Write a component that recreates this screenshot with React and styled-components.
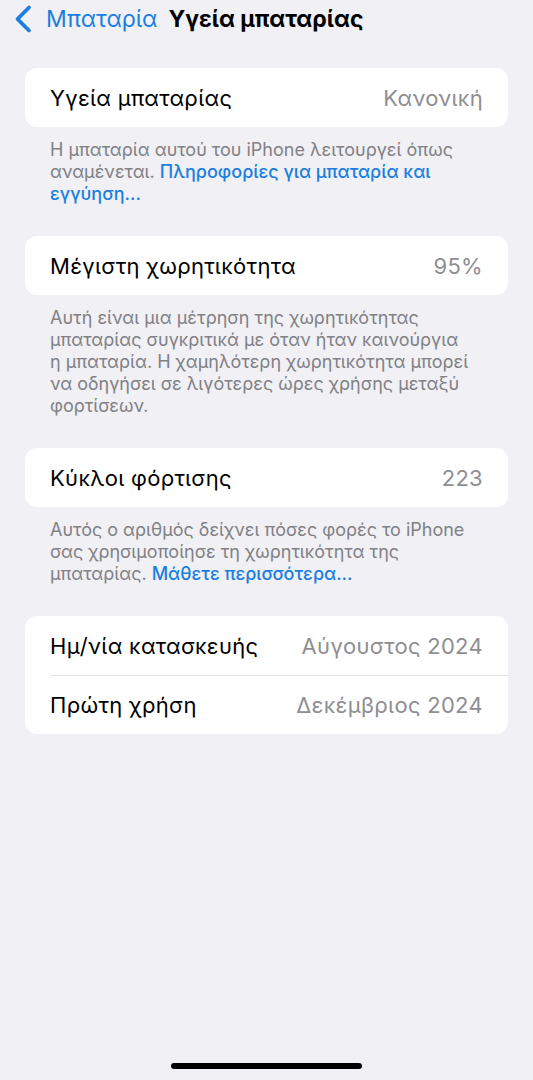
import React from "react";
import styled, { createGlobalStyle } from "styled-components";

const GlobalStyle = createGlobalStyle`
  html, body {
    margin: 0;
    padding: 0;
    background: #f0f0f5;
  }
  body {
    font-family: Inter, "Noto Sans", sans-serif;
    -webkit-font-smoothing: antialiased;
  }
`;

const Page = styled.div`
  width: 533px;
  min-height: 1080px;
  box-sizing: border-box;
  display: flex;
  flex-direction: column;
  background: #f0f0f5;
`;

const NavBar = styled.div`
  height: 38px;
  display: flex;
  align-items: center;
  padding-left: 14px;
  gap: 11px;
`;

const Back = styled.div`
  display: flex;
  align-items: center;
  gap: 12px;
  color: #1a7fe0;
  font-size: 23px;
`;

const NavTitle = styled.div`
  font-size: 23px;
  font-weight: 700;
  color: #000;
`;

const Content = styled.div`
  padding: 30px 25px 0;
  display: flex;
  flex-direction: column;
`;

const Group = styled.div`
  margin-bottom: 31px;
`;

const Card = styled.div`
  background: #fff;
  border-radius: 12px;
  padding-left: 25px;
`;

const Row = styled.div`
  height: 59px;
  display: flex;
  align-items: center;
  justify-content: space-between;
  padding-right: 25px;
  border-top: ${({ $divider }) => ($divider ? "1px solid #e3e3e8" : "none")};
  box-sizing: border-box;
`;

const Label = styled.span`
  font-size: 22px;
  letter-spacing: 0.3px;
  color: #000;
`;

const Value = styled.span`
  font-size: 22px;
  letter-spacing: 0.3px;
  color: #8e8e93;
`;

const Footer = styled.p`
  margin: 12px 0 0;
  padding: 0 25px;
  font-size: 18px;
  line-height: 22px;
  color: #818186;
`;

const Link = styled.span`
  color: #1a7fe0;
  font-weight: 500;
`;

const HomeBar = styled.div`
  margin: auto auto 11px;
  width: 191px;
  height: 6px;
  border-radius: 3px;
  background: #000;
`;

const Chevron = () => (
  <svg width="20" height="30" viewBox="0 0 20 30">
    <path
      d="M15 3.5 L3.5 15 L15 26.5"
      fill="none"
      stroke="#1a7fe0"
      strokeWidth="3.8"
      strokeLinecap="round"
      strokeLinejoin="round"
    />
  </svg>
);

const groups = [
  {
    rows: [{ label: "Υγεία μπαταρίας", value: "Κανονική" }],
    text: "Η μπαταρία αυτού του iPhone λειτουργεί όπως αναμένεται. ",
    link: "Πληροφορίες για μπαταρία και εγγύηση...",
  },
  {
    rows: [{ label: "Μέγιστη χωρητικότητα", value: "95%" }],
    text:
      "Αυτή είναι μια μέτρηση της χωρητικότητας μπαταρίας συγκριτικά με όταν ήταν καινούργια η\u00a0μπαταρία. Η χαμηλότερη χωρητικότητα μπορεί να οδηγήσει σε λιγότερες ώρες χρήσης μεταξύ φορτίσεων.",
  },
  {
    rows: [{ label: "Κύκλοι φόρτισης", value: "223" }],
    text:
      "Αυτός ο αριθμός δείχνει πόσες φορές το iPhone σας χρησιμοποίησε τη χωρητικότητα της μπαταρίας. ",
    link: "Μάθετε περισσότερα...",
  },
  {
    rows: [
      { label: "Ημ/νία κατασκευής", value: "Αύγουστος 2024" },
      { label: "Πρώτη χρήση", value: "Δεκέμβριος 2024" },
    ],
  },
];

export default function App() {
  return (
    <Page>
      <GlobalStyle />
      <NavBar>
        <Back>
          <Chevron />
          Μπαταρία
        </Back>
        <NavTitle>Υγεία μπαταρίας</NavTitle>
      </NavBar>
      <Content>
        {groups.map((g, i) => (
          <Group key={i}>
            <Card>
              {g.rows.map((r, j) => (
                <Row key={r.label} $divider={j > 0}>
                  <Label>{r.label}</Label>
                  <Value>{r.value}</Value>
                </Row>
              ))}
            </Card>
            {g.text && (
              <Footer>
                {g.text}
                {g.link && <Link>{g.link}</Link>}
              </Footer>
            )}
          </Group>
        ))}
      </Content>
      <HomeBar />
    </Page>
  );
}
